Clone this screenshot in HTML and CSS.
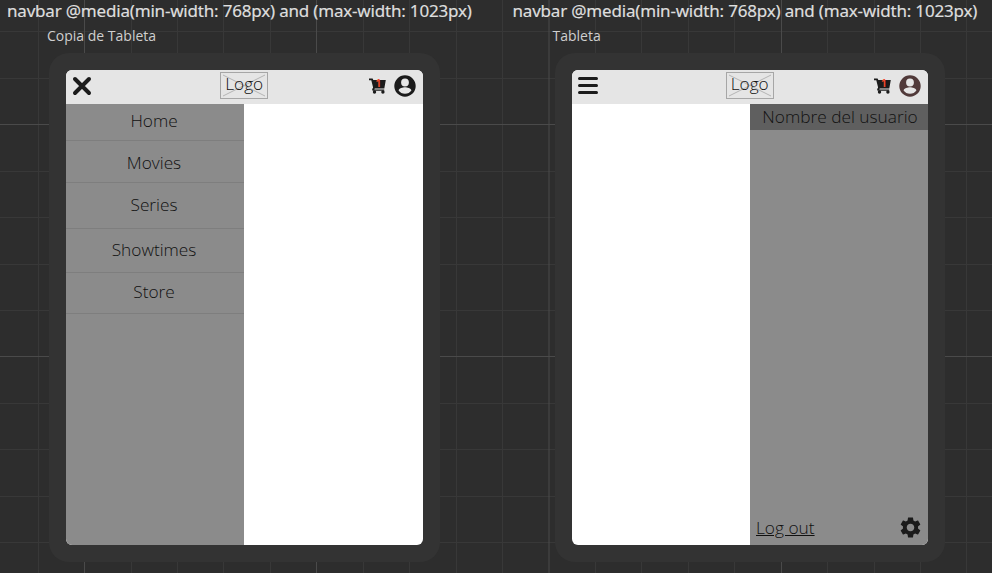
FILE: index.html
```html
<!DOCTYPE html>
<html lang="es">
<head>
<meta charset="utf-8">
<title>Navbar tableta</title>
<link rel="stylesheet" href="styles.css">
</head>
<body>
<svg class="canvas-grid" width="992" height="573" aria-hidden="true">
  <path class="minor" d="M38.5 0V573M131.5 0V573M177.5 0V573M223.5 0V573M270.5 0V573M363.5 0V573M409.5 0V573M456.5 0V573M502.5 0V573M595.5 0V573M641.5 0V573M688.5 0V573M734.5 0V573M827.5 0V573M874.5 0V573M920.5 0V573M966.5 0V573M0 31.500H992M0 78.500H992M0 171.500H992M0 217.500H992M0 264.500H992M0 310.500H992M0 403.500H992M0 449.500H992M0 496.500H992M0 542.500H992"/>
  <path class="major" d="M84.500 0V573M316.500 0V573M549 0V573M781.500 0V573M0 124.500H992M0 356.500H992"/>
</svg>
<svg width="0" height="0" class="symbols" aria-hidden="true">
  <symbol id="user" viewBox="0 0 22 22">
    <path fill-rule="evenodd" d="M11 .3a10.700 10.700 0 1 0 0 21.400A10.700 10.700 0 0 0 11 .3ZM11 3.600a3.900 3.900 0 1 1 0 7.800 3.900 3.900 0 0 1 0-7.800ZM11 18.800c-2.700 0-5-1.300-6.400-3.300.1-2.100 4.300-3.200 6.400-3.200s6.300 1.100 6.400 3.200c-1.400 2-3.700 3.300-6.400 3.300Z"/>
  </symbol>
  <symbol id="cart" viewBox="0 0 17 16">
    <path d="M0 .6h3.600l.7 1.400h12.500l-1.500 8.400H5.700l-.4 1h9.900v1.400H3.600l-.5-1.600 1-1.700L2.300 2.200H0Z"/>
    <path class="basket-line" d="M6 10.800H15"/>
    <circle cx="5.500" cy="14" r="1.700"/><circle cx="13.900" cy="14" r="1.700"/>
  </symbol>
  <symbol id="gear" viewBox="2 2 20 20">
    <path d="M19.140 12.940c.04-.3.060-.61.060-.94 0-.32-.02-.64-.07-.94l2.030-1.580c.18-.14.23-.41.120-.61l-1.920-3.320c-.12-.22-.37-.29-.59-.22l-2.390.96c-.5-.38-1.030-.7-1.620-.94l-.36-2.540c-.04-.24-.24-.41-.48-.41h-3.840c-.24 0-.43.17-.47.41l-.36 2.540c-.59.24-1.130.57-1.620.94l-2.390-.96c-.22-.08-.47 0-.59.22L2.740 8.870c-.12.210-.08.470.12.610l2.030 1.580c-.05.3-.09.630-.09.940s.02.640.07.940l-2.030 1.580c-.18.140-.23.410-.12.610l1.920 3.320c.12.220.37.290.59.220l2.390-.96c.5.380 1.030.7 1.620.94l.36 2.540c.05.240.24.410.48.410h3.840c.24 0 .44-.17.470-.41l.36-2.540c.59-.24 1.130-.56 1.620-.94l2.390.96c.22.080.47 0 .59-.22l1.920-3.320c.12-.22.070-.47-.12-.61l-2.010-1.580ZM12 15.600c-1.980 0-3.600-1.620-3.600-3.600s1.620-3.600 3.600-3.600 3.600 1.620 3.600 3.600-1.620 3.600-3.600 3.600Z"/>
  </symbol>
</svg>
<main class="board">
  <section class="artboard">
    <h1 class="title">navbar @media(min-width: 768px) and (max-width: 1023px)</h1>
    <h2 class="name">Copia de Tableta</h2>
    <div class="device">
      <div class="screen">
        <header class="navbar">
          <svg class="toggle" viewBox="0 0 20 20"><path class="cross" d="M3 3L17 17M17 3L3 17"/></svg>
          <div class="logo"><svg viewBox="0 0 46 25"><path d="M2 2L44 23M44 2L2 23"/></svg><span>Logo</span></div>
          <div class="actions">
            <div class="cart"><svg><use href="#cart"/></svg><span class="count">1</span></div>
            <svg class="user"><use href="#user"/></svg>
          </div>
        </header>
        <nav class="panel menu">
          <a class="item home">Home</a>
          <a class="item movies">Movies</a>
          <a class="item series">Series</a>
          <a class="item showtimes">Showtimes</a>
          <a class="item store">Store</a>
        </nav>
      </div>
    </div>
  </section>
  <section class="artboard">
    <h1 class="title">navbar @media(min-width: 768px) and (max-width: 1023px)</h1>
    <h2 class="name">Tableta</h2>
    <div class="device">
      <div class="screen">
        <header class="navbar">
          <svg class="toggle" viewBox="0 0 20 20"><path class="bars" d="M1.500 2.500H18.500M1.500 9.500H18.500M1.500 16.500H18.500"/></svg>
          <div class="logo"><svg viewBox="0 0 46 25"><path d="M2 2L44 23M44 2L2 23"/></svg><span>Logo</span></div>
          <div class="actions">
            <div class="cart"><svg><use href="#cart"/></svg><span class="count">1</span></div>
            <svg class="user active"><use href="#user"/></svg>
          </div>
        </header>
        <aside class="panel account">
          <div class="username">Nombre del usuario</div>
          <footer class="account-footer">
            <a class="logout">Log out</a>
            <svg class="gear"><use href="#gear"/></svg>
          </footer>
        </aside>
      </div>
    </div>
  </section>
</main>
</body>
</html>
```
FILE: styles.css
```css
* { box-sizing: border-box; }
body {
  margin: 0;
  width: 992px;
  height: 573px;
  overflow: hidden;
  background: #2d2d2d;
  font-family: "Open Sans", "Noto Sans", sans-serif;
}
svg { display: block; }
.canvas-grid { position: absolute; top: 0; left: 0; z-index: -1; fill: none; }
.minor { stroke: #383838; }
.major { stroke: #4a4a4a; }
.symbols { position: absolute; }
.board { display: flex; padding-left: 7px; }
.artboard { flex: 0 0 505.500px; }
.title {
  margin: 0;
  height: 24px;
  font-size: 17px;
  line-height: 22px;
  font-weight: 400;
  font-family: "Noto Sans", sans-serif;
  letter-spacing: -0.19px;
  color: #dedede;
  -webkit-text-stroke: 0.2px #dedede;
  white-space: nowrap;
}
.name {
  margin: 0 0 0 40px;
  height: 29px;
  font-size: 14px;
  line-height: 23px;
  font-weight: 400;
  color: #cfcfcf;
}
.device {
  width: 390.500px;
  height: 509px;
  margin-left: 42px;
  padding: 17px;
  border-radius: 20px;
  background: #333;
}
.screen {
  display: flex;
  flex-direction: column;
  width: 356.500px;
  height: 475px;
  border-radius: 6px;
  overflow: hidden;
  background: #fff;
}
.navbar {
  display: grid;
  grid-template-columns: 1fr 48px 1fr;
  align-items: center;
  flex: 0 0 33.500px;
  padding: 0 6px;
  background: #e5e5e5;
}
.toggle { width: 20px; height: 20px; margin-top: -1px; fill: none; stroke: #1b1b1b; stroke-linecap: round; }
.cross { stroke-width: 4; }
.bars { stroke-width: 3; }
.logo { display: grid; height: 27px; margin-top: -3px; border: 1px solid #a6a6a6; }
.logo svg, .logo span { grid-area: 1 / 1; }
.logo svg { width: 46px; height: 25px; fill: none; stroke: #b4b4b4; }
.logo span { text-align: center; font-size: 17.200px; line-height: 22px; font-weight: 300; color: #111; }
.actions { display: flex; align-items: center; justify-content: flex-end; gap: 8px; padding-right: 1px; }
.cart { position: relative; width: 17px; height: 16px; margin-top: -1px; fill: #1b1b1b; }
.cart svg { width: 17px; height: 16px; }
.basket-line { fill: none; stroke: #888; stroke-width: 0.8; }
.count { position: absolute; left: 7px; top: 0; font-size: 10px; line-height: 11px; font-weight: 700; color: #f0492c; }
.user { width: 22px; height: 22px; margin-top: -1px; fill: #1b1b1b; }
.user.active { fill: #513a3a; }
.panel { flex: 1; width: 178px; background: #8b8b8b; }
.item {
  display: flex;
  align-items: center;
  justify-content: center;
  padding: 0 2px 2px 0;
  border-bottom: 1px solid #7e7e7e;
  font-size: 17.250px;
  font-weight: 300;
  color: #111;
}
.home { height: 37.500px; }
.movies { height: 42px; padding-bottom: 0; padding-top: 1px; }
.series { height: 46px; }
.showtimes { height: 44px; }
.store { height: 41px; padding-bottom: 3px; }
.account { display: flex; flex-direction: column; justify-content: space-between; align-self: flex-end; }
.username {
  height: 26.500px;
  padding-left: 2px;
  background: #5f5f5f;
  font-size: 17.300px;
  line-height: 26px;
  font-weight: 300;
  text-align: center;
  color: #111;
}
.account-footer { display: flex; align-items: center; justify-content: space-between; padding: 0 7px 6px 6px; }
.logout { font-size: 17.300px; line-height: 23px; font-weight: 300; text-decoration: underline; color: #111; }
.gear { width: 21px; height: 21px; fill: #1b1b1b; }
```
